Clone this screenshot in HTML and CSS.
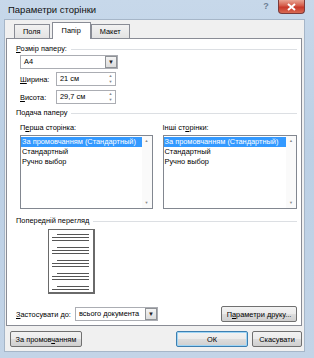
FILE: index.html
```html
<!DOCTYPE html>
<html lang="uk">
<head>
    <meta charset="UTF-8">
    <title>Параметри сторінки</title>
    <link rel="stylesheet" href="styles.css">
</head>
<body>
    <div class="window">
        <div class="titlebar">
            <span class="title">Параметри сторінки</span>
            <div class="caption-btns">
                <span class="help-btn">?</span>
                <span class="close-btn">
                    <svg width="9" height="8" viewBox="0 0 9 8"><path d="M1 1 L8 7 M8 1 L1 7" stroke="#fff" stroke-width="2"/></svg>
                </span>
            </div>
        </div>

        <div class="client">
            <div class="tabs">
                <span class="tab">Поля</span>
                <span class="tab active">Папір</span>
                <span class="tab">Макет</span>
            </div>

            <div class="panel">
                <div class="group-title"><span><u>Р</u>озмір паперу:</span><span class="rule"></span></div>
                <div class="combo size-combo">
                    <span class="combo-text">A4</span>
                    <span class="combo-btn">&#9660;</span>
                </div>

                <div class="spin-row">
                    <span class="spin-label"><u>Ш</u>ирина:</span>
                    <div class="spin">
                        <span class="spin-text">21 см</span>
                        <span class="spin-arrows"><i>&#9650;</i><i>&#9660;</i></span>
                    </div>
                </div>
                <div class="spin-row second">
                    <span class="spin-label"><u>В</u>исота:</span>
                    <div class="spin">
                        <span class="spin-text">29,7 см</span>
                        <span class="spin-arrows"><i>&#9650;</i><i>&#9660;</i></span>
                    </div>
                </div>

                <div class="group-title feed"><span>Подача паперу</span><span class="rule"></span></div>
                <div class="columns">
                    <div class="column left">
                        <span class="col-label">П<u>е</u>рша сторінка:</span>
                        <div class="listbox">
                            <div class="items">
                                <span class="item selected">За промовчанням (Стандартный)</span>
                                <span class="item">Стандартный</span>
                                <span class="item">Ручно выбор</span>
                            </div>
                            <div class="scroll"><i>&#9650;</i><i>&#9660;</i></div>
                        </div>
                    </div>
                    <div class="column right">
                        <span class="col-label">Інші ст<u>о</u>рінки:</span>
                        <div class="listbox">
                            <div class="items">
                                <span class="item selected">За промовчанням (Стандартный)</span>
                                <span class="item">Стандартный</span>
                                <span class="item">Ручно выбор</span>
                            </div>
                            <div class="scroll"><i>&#9650;</i><i>&#9660;</i></div>
                        </div>
                    </div>
                </div>

                <div class="group-title preview-title"><span>Попередній перегляд</span><span class="rule"></span></div>
                <div class="page">
                    <span class="line short"></span><span class="line"></span><span class="line"></span>
                    <span class="line short gap"></span><span class="line"></span><span class="line"></span>
                    <span class="line short gap"></span><span class="line"></span><span class="line"></span>
                    <span class="line short gap"></span><span class="line"></span><span class="line"></span>
                    <span class="line short gap"></span><span class="line"></span>
                </div>

                <div class="apply-row">
                    <span class="apply-label"><u>З</u>астосувати до:</span>
                    <div class="combo apply-combo">
                        <span class="combo-text">всього документа</span>
                        <span class="combo-btn">&#9660;</span>
                    </div>
                    <button class="btn print-btn">П<u>а</u>раметри друку...</button>
                </div>
            </div>

            <div class="footer">
                <button class="btn">За промов<u>ч</u>анням</button>
                <div class="footer-right">
                    <button class="btn ok-btn">ОК</button>
                    <button class="btn">Скасувати</button>
                </div>
            </div>
        </div>
    </div>
</body>
</html>
```

FILE: styles.css
```css
* {
    margin: 0;
    padding: 0;
    box-sizing: border-box;
}

body {
    font-family: 'Liberation Sans', Arial, sans-serif;
    font-size: 7.4px;
    color: #000;
    background: #bfd2e6;
}

u {
    text-decoration: underline;
}

.window {
    width: 314px;
    height: 358px;
    background: linear-gradient(180deg, #c7d8ea 0%, #bcd0e5 40%, #c3d4e7 100%);
    display: flex;
    flex-direction: column;
}

.titlebar {
    height: 19px;
    display: flex;
    align-items: flex-start;
    padding-left: 8px;
}

.title {
    font-size: 9.5px;
    line-height: 12px;
    margin-top: 4px;
    color: #111;
}

.caption-btns {
    margin-left: auto;
    margin-right: 9px;
    display: flex;
    align-items: flex-start;
}

.help-btn {
    width: 16px;
    height: 13px;
    margin-right: 4px;
    font-size: 9px;
    line-height: 12px;
    text-align: center;
    color: #6d7e94;
    font-weight: bold;
}

.close-btn {
    width: 27px;
    height: 14px;
    border: 1px solid #7a3a3a;
    border-top: none;
    border-radius: 0 0 4px 4px;
    background: linear-gradient(180deg, #e8a493 0%, #d45a48 45%, #c8382a 55%, #d86a52 100%);
    display: flex;
    align-items: center;
    justify-content: center;
}

.client {
    flex: 1;
    margin: 0 9px 6px 4px;
    background: #f0f0f0;
    border: 1px solid #a6b6c8;
    display: flex;
    flex-direction: column;
}

.tabs {
    display: flex;
    align-items: flex-end;
    padding-left: 9px;
    height: 18px;
    position: relative;
    z-index: 1;
}

.tab {
    height: 14px;
    padding: 0 8px;
    margin-right: 1px;
    line-height: 13px;
    border: 1px solid #898c95;
    border-bottom: none;
    background: linear-gradient(180deg, #f2f2f2, #e3e3e3);
}

.tab.active {
    height: 17px;
    background: #fff;
    margin: 0 0 -1px 1px;
    padding: 0 9px;
    line-height: 15px;
}

.tab.active + .tab {
    margin-left: 0;
}

.panel {
    height: 288px;
    margin: 0 2px 0 1px;
    background: #fff;
    border: 1px solid #898c95;
    padding: 4px 4px 4px 9px;
    display: flex;
    flex-direction: column;
}

.group-title {
    height: 12px;
    line-height: 12px;
    display: flex;
    align-items: center;
}

.rule {
    flex: 1;
    height: 1px;
    background: #dcdfe3;
    margin-left: 4px;
}

.combo {
    height: 14px;
    border: 1px solid #abadb3;
    display: flex;
    align-items: stretch;
    background: #fff;
}

.size-combo {
    width: 98px;
    margin-left: 4px;
}

.combo-text {
    flex: 1;
    padding-left: 3px;
    line-height: 12px;
    white-space: nowrap;
    overflow: hidden;
}

.combo-btn {
    width: 12px;
    border: 1px solid #8f9296;
    background: linear-gradient(180deg, #f4f4f4, #dcdcdc);
    font-size: 6px;
    line-height: 11px;
    text-align: center;
    color: #222;
}

.spin-row {
    display: flex;
    align-items: center;
    margin: 3px 0 0 4px;
    height: 14px;
}

.spin-row.second {
    margin-top: 4px;
}

.spin-label {
    width: 36px;
}

.spin {
    width: 60px;
    height: 14px;
    border: 1px solid #abadb3;
    display: flex;
}

.spin-text {
    flex: 1;
    padding-left: 3px;
    line-height: 12px;
}

.spin-arrows {
    width: 9px;
    display: flex;
    flex-direction: column;
}

.spin-arrows i,
.scroll i {
    font-style: normal;
    font-size: 4px;
    line-height: 6px;
    text-align: center;
    color: #8a8a8a;
}

.group-title.feed {
    margin-top: 3px;
}

.columns {
    display: flex;
    gap: 10px;
    margin: 3px 0 0 4px;
}

.column {
    display: flex;
    flex-direction: column;
}

.column.left {
    width: 133px;
}

.column.right {
    width: 135px;
}

.col-label {
    height: 12px;
    line-height: 12px;
    margin-bottom: 1px;
}

.listbox {
    height: 74px;
    border: 1px solid #828790;
    display: flex;
    background: #fff;
}

.items {
    flex: 1;
    display: flex;
    flex-direction: column;
    padding-top: 1px;
    min-width: 0;
}

.item {
    height: 10px;
    line-height: 10px;
    padding-left: 1px;
    white-space: nowrap;
}

.item.selected {
    background: #3399ff;
    color: #fff;
}

.scroll {
    width: 10px;
    display: flex;
    flex-direction: column;
    justify-content: space-between;
    padding: 2px 0;
    background: #fafafa;
}

.preview-title {
    margin-top: 6px;
}

.page {
    width: 47px;
    height: 66px;
    margin: 2px 0 0 32px;
    border: 1px solid #6a6a6a;
    border-right-width: 2px;
    border-bottom-width: 2px;
    background: #fff;
    display: flex;
    flex-direction: column;
    align-items: flex-end;
    padding: 4px 4px 0 0;
}

.line {
    width: 37px;
    height: 1px;
    background: #555;
    margin-bottom: 2px;
}

.line.short {
    width: 32px;
}

.line.gap {
    margin-top: 4px;
}

.apply-row {
    display: flex;
    align-items: center;
    margin-top: 12px;
    height: 16px;
}

.apply-label {
    width: 59px;
    white-space: nowrap;
    flex-shrink: 0;
}

.apply-combo {
    width: 83px;
}

.btn {
    font-family: 'Liberation Sans', Arial, sans-serif;
    font-size: 7.4px;
    color: #000;
    height: 16px;
    padding: 0 2px;
    border: 1px solid #707070;
    border-radius: 2px;
    background: linear-gradient(180deg, #f2f2f2 0%, #ebebeb 50%, #dddddd 51%, #cfcfcf 100%);
    white-space: nowrap;
}

.print-btn {
    margin-left: auto;
    width: 76px;
}

.footer {
    flex: 1;
    display: flex;
    align-items: flex-start;
    padding: 5px 2px 0 5px;
}

.footer .btn:first-child {
    width: 72px;
}

.footer-right {
    margin-left: auto;
    display: flex;
    gap: 4px;
}

.footer-right .btn {
    width: 50px;
}

.ok-btn {
    border-color: #3c7fb1;
    box-shadow: inset 0 0 0 1px #9fd5f5;
}
```
